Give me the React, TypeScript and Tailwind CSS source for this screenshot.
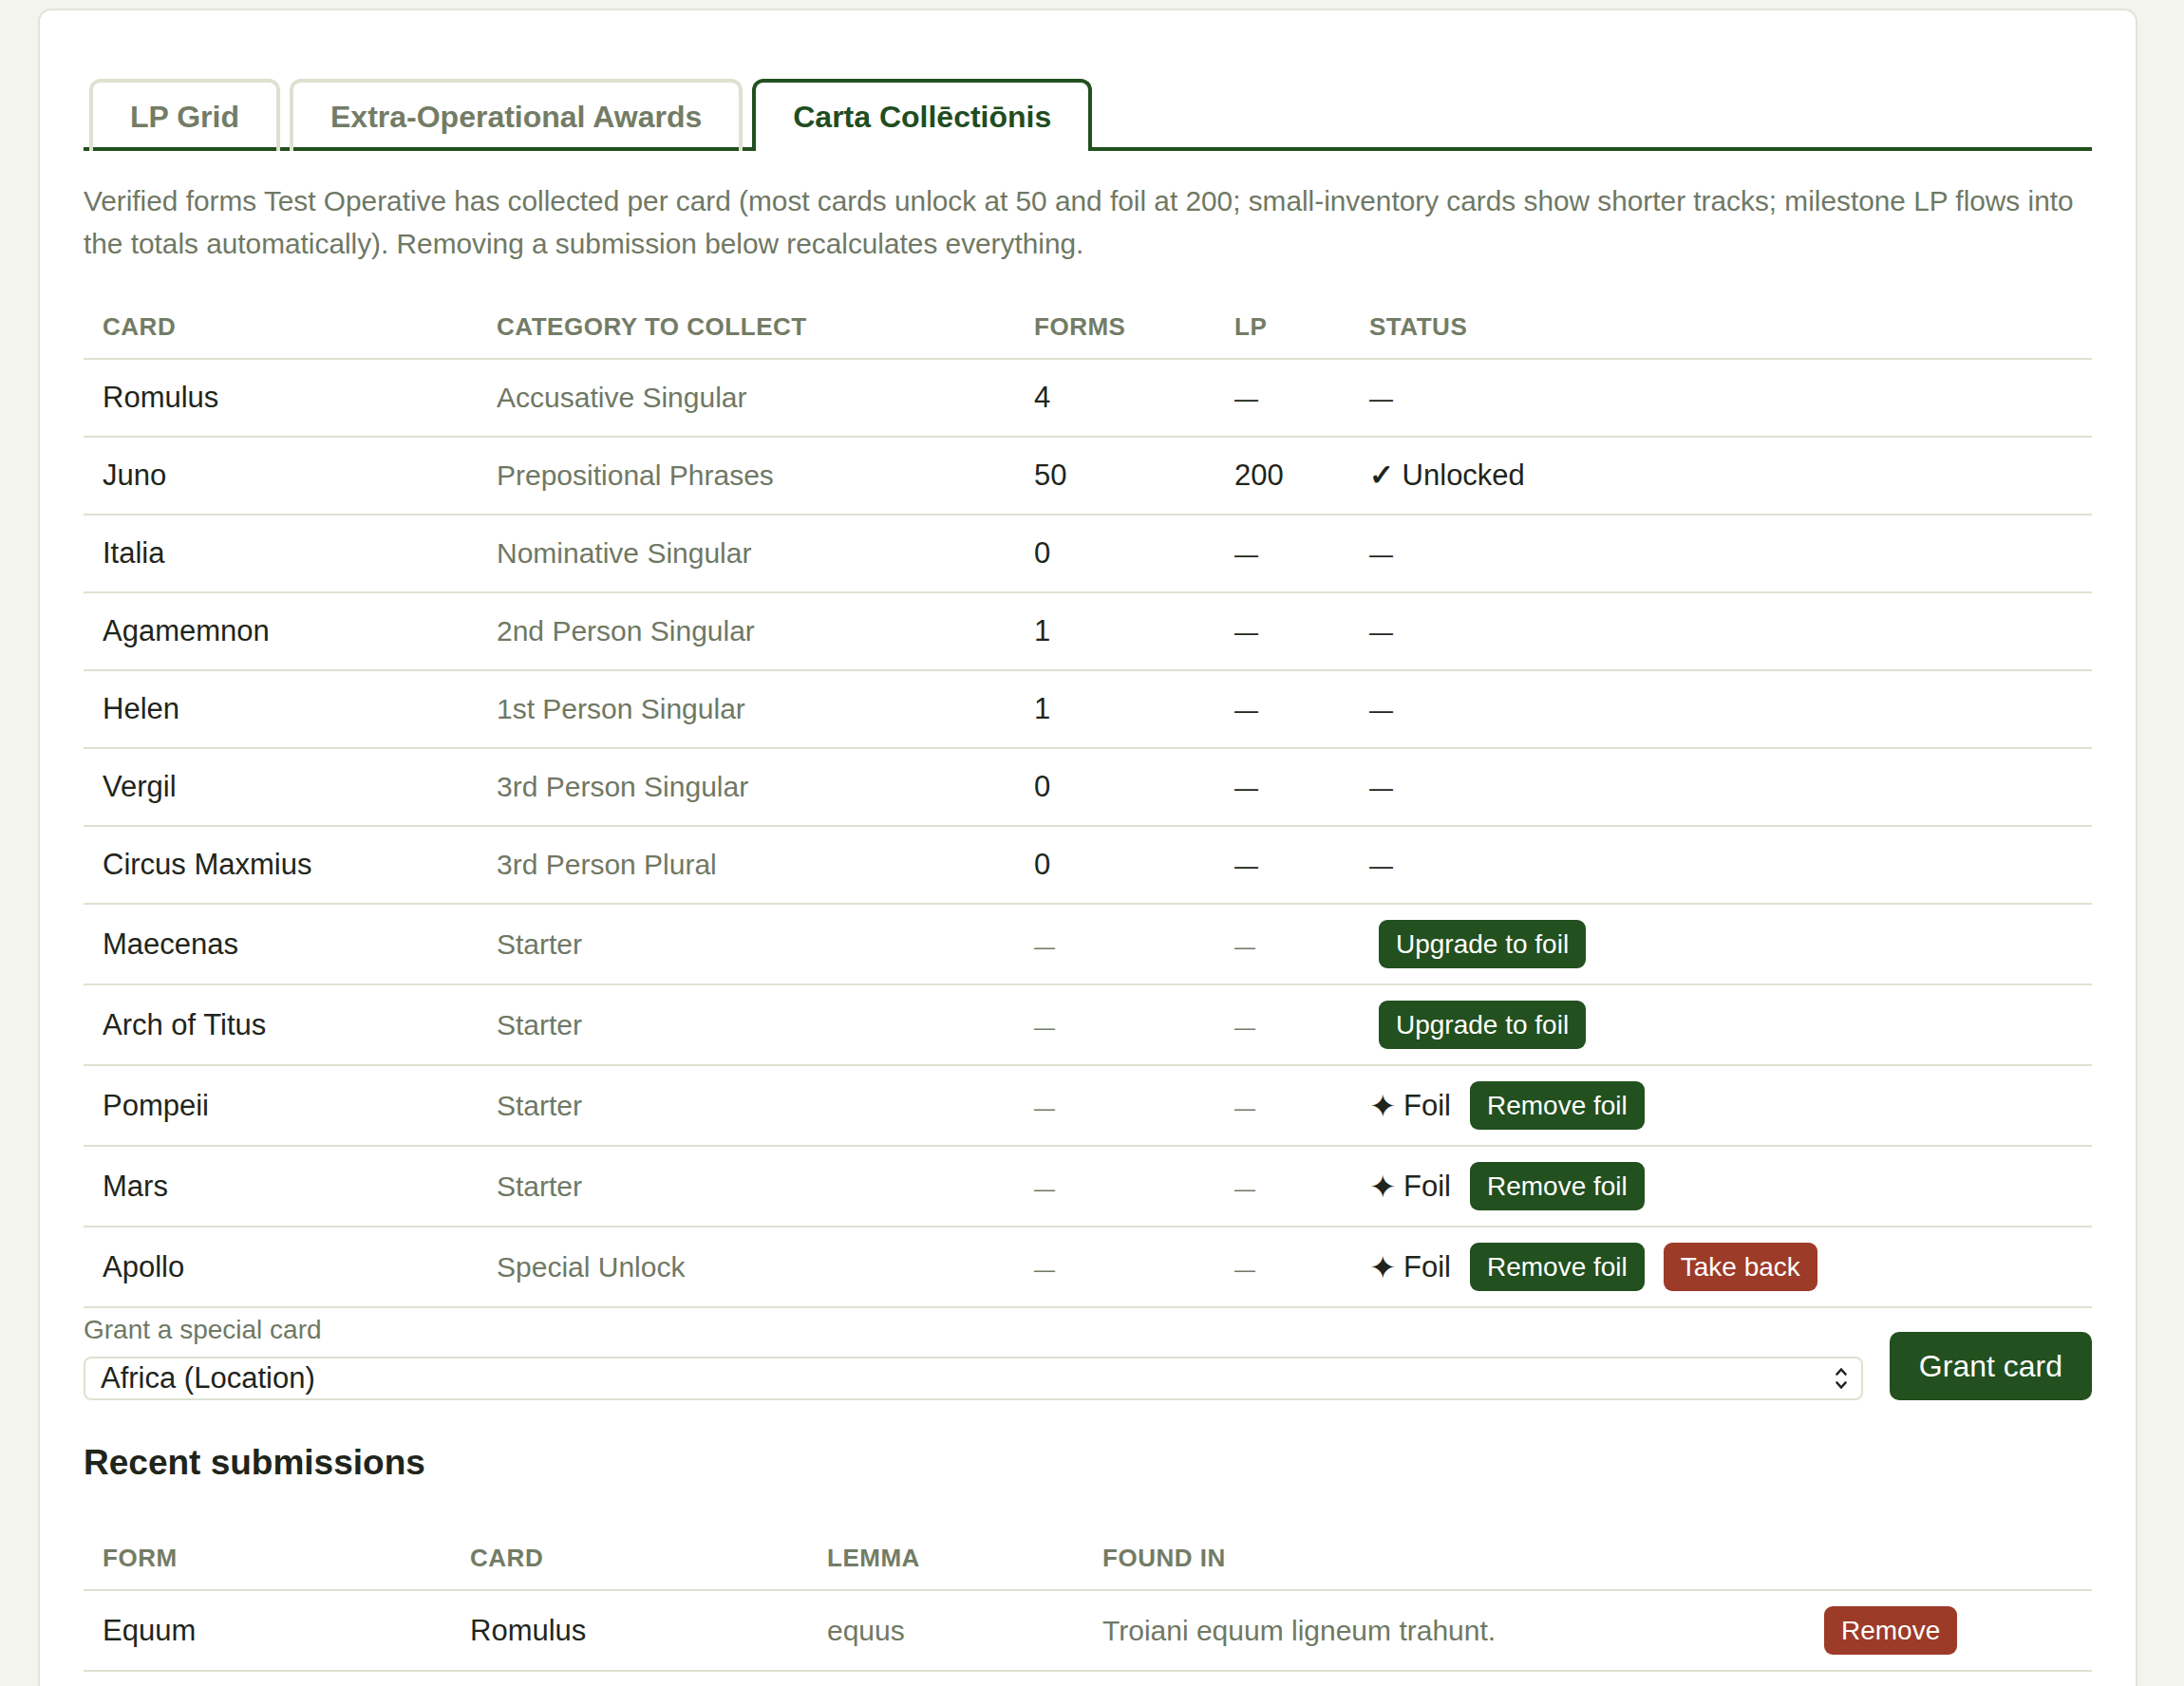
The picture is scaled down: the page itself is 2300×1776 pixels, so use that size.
import React from "react";
import clsx from "clsx";

type Status = "none" | "unlocked" | "upgrade" | "foil" | "foil-special";

interface CardRow {
  card: string;
  category: string;
  forms?: string;
  lp?: string;
  status: Status;
}

const cardRows: CardRow[] = [
  { card: "Romulus", category: "Accusative Singular", forms: "4", status: "none" },
  { card: "Juno", category: "Prepositional Phrases", forms: "50", lp: "200", status: "unlocked" },
  { card: "Italia", category: "Nominative Singular", forms: "0", status: "none" },
  { card: "Agamemnon", category: "2nd Person Singular", forms: "1", status: "none" },
  { card: "Helen", category: "1st Person Singular", forms: "1", status: "none" },
  { card: "Vergil", category: "3rd Person Singular", forms: "0", status: "none" },
  { card: "Circus Maxmius", category: "3rd Person Plural", forms: "0", status: "none" },
  { card: "Maecenas", category: "Starter", status: "upgrade" },
  { card: "Arch of Titus", category: "Starter", status: "upgrade" },
  { card: "Pompeii", category: "Starter", status: "foil" },
  { card: "Mars", category: "Starter", status: "foil" },
  { card: "Apollo", category: "Special Unlock", status: "foil-special" },
];

const submissions = [
  { form: "Equum", card: "Romulus", lemma: "equus", foundIn: "Troiani equum ligneum trahunt." },
];

const tabs = ["LP Grid", "Extra-Operational Awards", "Carta Collēctiōnis"];

const ActionButton = ({
  tone = "green",
  children,
  className,
}: {
  tone?: "green" | "red";
  children: React.ReactNode;
  className?: string;
}) => (
  <button
    className={clsx(
      "inline-flex h-[51px] items-center rounded-[9px] px-[18px] text-[28px] leading-none text-white",
      tone === "red" ? "bg-[#9d3b29]" : "bg-[#22501f]",
      className
    )}
  >
    {children}
  </button>
);

const Dash = () => <span className="text-[25px] leading-none">—</span>;
const MutedDash = () => <span className="text-[22px] leading-none text-[#737c66]">—</span>;

const StatusCell = ({ status }: { status: Status }) => {
  if (status === "none") return <Dash />;
  if (status === "unlocked") {
    return (
      <span>
        <span className="font-bold leading-none">✓</span> Unlocked
      </span>
    );
  }
  if (status === "upgrade") {
    return <ActionButton className="ml-[10px]">Upgrade to foil</ActionButton>;
  }
  return (
    <div className="flex items-center gap-[10px]">
      <span className="flex items-center gap-[8px]">
        <span className="text-[34px] leading-none">✦</span>
        Foil
      </span>
      <ActionButton className="ml-[10px]">Remove foil</ActionButton>
      {status === "foil-special" && (
        <ActionButton tone="red" className="ml-[10px]">
          Take back
        </ActionButton>
      )}
    </div>
  );
};

const th = "px-[20px] pt-[18px] pb-[14px] text-left align-middle text-[26px] font-bold uppercase leading-[38px] tracking-[0.02em] text-[#737c66] border-b-2 border-[#dde2d0]";
const td = "px-[20px] py-4 align-middle leading-[48px] border-b-2 border-[#dde2d0]";

export default function App() {
  const active = 2;

  return (
    <div className="min-h-screen bg-[#f3f4ed] pt-[9px] pb-[40px] font-['Liberation_Sans',Arial,sans-serif] text-[#1f251b]">
      <div className="ml-[40px] w-[2211px] rounded-[14px] border-2 border-[#e1e4d8] bg-white px-[46px] pt-[72px] pb-[60px]">
        {/* tab strip */}
        <div className="flex gap-[10px] border-b-4 border-[#22501f] pl-[6px]">
          {tabs.map((tab, i) => (
            <div
              key={tab}
              className={clsx(
                "-mb-1 rounded-t-[12px] border-4 border-b-0 px-[39px] py-4 text-[32px] font-bold leading-[40px]",
                i === active
                  ? "border-[#22501f] bg-white text-[#1f4d1f]"
                  : "border-[#dde2d0] bg-transparent text-[#737c66]"
              )}
            >
              {tab}
            </div>
          ))}
        </div>

        <p className="mt-[30px] text-[29.8px] leading-[45px] text-[#6f7864]">
          Verified forms Test Operative has collected per card (most cards unlock at 50 and foil at 200; small-inventory cards show shorter tracks; milestone LP flows into the totals automatically). Removing a submission below recalculates everything.
        </p>

        <table className="mt-[28px] w-full table-fixed border-collapse text-[31px]">
          <colgroup>
            <col className="w-[415px]" />
            <col className="w-[566px]" />
            <col className="w-[211px]" />
            <col className="w-[142px]" />
            <col />
          </colgroup>
          <thead>
            <tr>
              <th className={th}>Card</th>
              <th className={th}>Category to collect</th>
              <th className={th}>Forms</th>
              <th className={th}>LP</th>
              <th className={th}>Status</th>
            </tr>
          </thead>
          <tbody>
            {cardRows.map((row) => {
              const starter = row.forms === undefined;
              return (
                <tr key={row.card}>
                  <td className={td}>{row.card}</td>
                  <td className={clsx(td, "text-[30px] text-[#6f7864]")}>{row.category}</td>
                  <td className={td}>{starter ? <MutedDash /> : row.forms}</td>
                  <td className={td}>{starter ? <MutedDash /> : row.lp ?? <Dash />}</td>
                  <td className={td}>
                    <StatusCell status={row.status} />
                  </td>
                </tr>
              );
            })}
          </tbody>
        </table>

        {/* grant a special card */}
        <div className="mt-[5px] flex items-end gap-[28px]">
          <div className="flex-1">
            <label className="block text-[28px] leading-[36px] text-[#6f7864]">Grant a special card</label>
            <div className="mt-[10px] flex h-[46px] items-center justify-between rounded-[8px] border-2 border-[#dde2d0] pl-[16px] pr-[14px] text-[31px]">
              <span>Africa (Location)</span>
              <svg width="14" height="26" viewBox="0 0 14 26" fill="none" stroke="#1f251b" strokeWidth="2.6" strokeLinecap="round" strokeLinejoin="round">
                <path d="M2.5 8.5 7 3.5l4.5 5" />
                <path d="M2.5 17.5 7 22.5l4.5-5" />
              </svg>
            </div>
          </div>
          <button className="h-[72px] rounded-[10px] bg-[#22501f] px-[31px] text-[32px] text-white">
            Grant card
          </button>
        </div>

        <h2 className="mt-[44px] text-[37px] font-bold leading-[44px]">Recent submissions</h2>

        <table className="mt-[41px] w-full table-fixed border-collapse text-[31px]">
          <colgroup>
            <col className="w-[387px]" />
            <col className="w-[376px]" />
            <col className="w-[290px]" />
            <col className="w-[760px]" />
            <col />
          </colgroup>
          <thead>
            <tr>
              <th className={th}>Form</th>
              <th className={th}>Card</th>
              <th className={th}>Lemma</th>
              <th className={th}>Found in</th>
              <th className={th}></th>
            </tr>
          </thead>
          <tbody>
            {submissions.map((s) => (
              <tr key={s.form}>
                <td className={td}>{s.form}</td>
                <td className={td}>{s.card}</td>
                <td className={clsx(td, "text-[30px] text-[#6f7864]")}>{s.lemma}</td>
                <td className={clsx(td, "text-[30px] text-[#6f7864]")}>{s.foundIn}</td>
                <td className={td}>
                  <ActionButton tone="red">Remove</ActionButton>
                </td>
              </tr>
            ))}
          </tbody>
        </table>
      </div>
    </div>
  );
}
